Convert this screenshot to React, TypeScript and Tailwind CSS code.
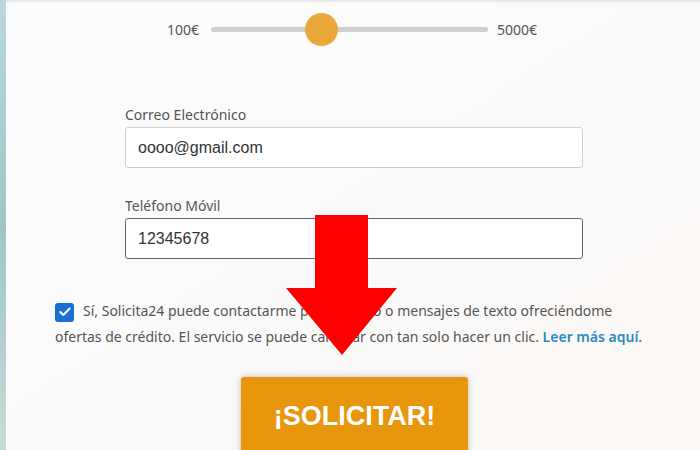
import { Check } from 'lucide-react';

const labelFont = { fontFamily: '"Noto Sans", "Open Sans", sans-serif' };

function AmountSlider() {
    return (
        <div className="flex h-[54px] shrink-0 items-center pl-[161px] text-[14px] text-[#555]" style={labelFont}>
            <span className="w-[44px]">100€</span>
            <div className="relative h-[5px] w-[277px] rounded-full bg-[#cfcfcf]">
                <div className="absolute left-[94px] top-[-14px] h-[33px] w-[33px] rounded-full bg-[#eba83a]" />
            </div>
            <span className="ml-[9px]">5000€</span>
        </div>
    );
}

function Field({ label, value, focused }: { label: string; value: string; focused?: boolean }) {
    return (
        <div className="flex flex-col">
            <label className="mb-[2px] text-[14px] leading-[20px] text-[#555]" style={labelFont}>
                {label}
            </label>
            <div
                className={
                    'flex h-[41px] w-[458px] items-center rounded-[3px] border bg-white px-[12px] text-[16px] text-[#333] ' +
                    (focused ? 'border-[#666]' : 'border-[#cfcfcf]')
                }
                style={{ fontFamily: '"Liberation Sans", Arial, sans-serif' }}
            >
                {value}
            </div>
        </div>
    );
}

export default function App() {
    return (
        <div className="relative flex h-[450px] w-[700px] overflow-hidden bg-white">
            {/* background photo peeking at the left edge */}
            <div className="w-[6px] bg-gradient-to-b from-[#bcd8e0] via-[#9fc4c8] to-[#c8dcd6]" />

            <div className="flex flex-1 flex-col border-t-2 border-[#e8e8e8] bg-gradient-to-br from-[#fbfcfd] via-[#fafafa] to-[#fdf8f4]">
                <AmountSlider />

                <div className="mt-[49px] flex shrink-0 flex-col gap-[28px] pl-[119px]">
                    <Field label="Correo Electrónico" value="oooo@gmail.com" />
                    <Field label="Teléfono Móvil" value="12345678" focused />
                </div>

                {/* consent */}
                <div
                    className="mt-[39px] shrink-0 pl-[49px] pr-[40px] text-[14px] leading-[26px] text-[#555]"
                    style={labelFont}
                >
                    <span className="mr-[9px] inline-flex h-[19px] w-[19px] translate-y-[3px] items-center justify-center rounded-[3px] bg-[#1a6fd6]">
                        <Check className="h-[14px] w-[14px] text-white" strokeWidth={3.5} />
                    </span>
                    Sí, Solicita24 puede contactarme por teléfono o mensajes de texto ofreciéndome ofertas de crédito. El
                    servicio se puede cancelar con tan solo hacer un clic.{' '}
                    <a className="font-semibold text-[#2a8ac4]">Leer más aquí.</a>
                </div>

                <div className="mt-[27px] shrink-0 pl-[235px]">
                    <button
                        className="flex h-[80px] w-[227px] items-start justify-center rounded-t-[3px] bg-[#e8960b] pt-[19px] text-[27px] font-black text-white shadow-[0_0_6px_rgba(0,0,0,0.25)]"
                        style={{ fontFamily: '"Liberation Sans", Arial, sans-serif' }}
                    >
                        ¡SOLICITAR!
                    </button>
                </div>
            </div>

            {/* big red pointer arrow */}
            <svg className="absolute left-0 top-0" width="700" height="450" viewBox="0 0 700 450">
                <polygon points="315,215 368,215 368,288 397,288 342,355 286,288 315,288" fill="#ff0000" />
            </svg>
        </div>
    );
}
